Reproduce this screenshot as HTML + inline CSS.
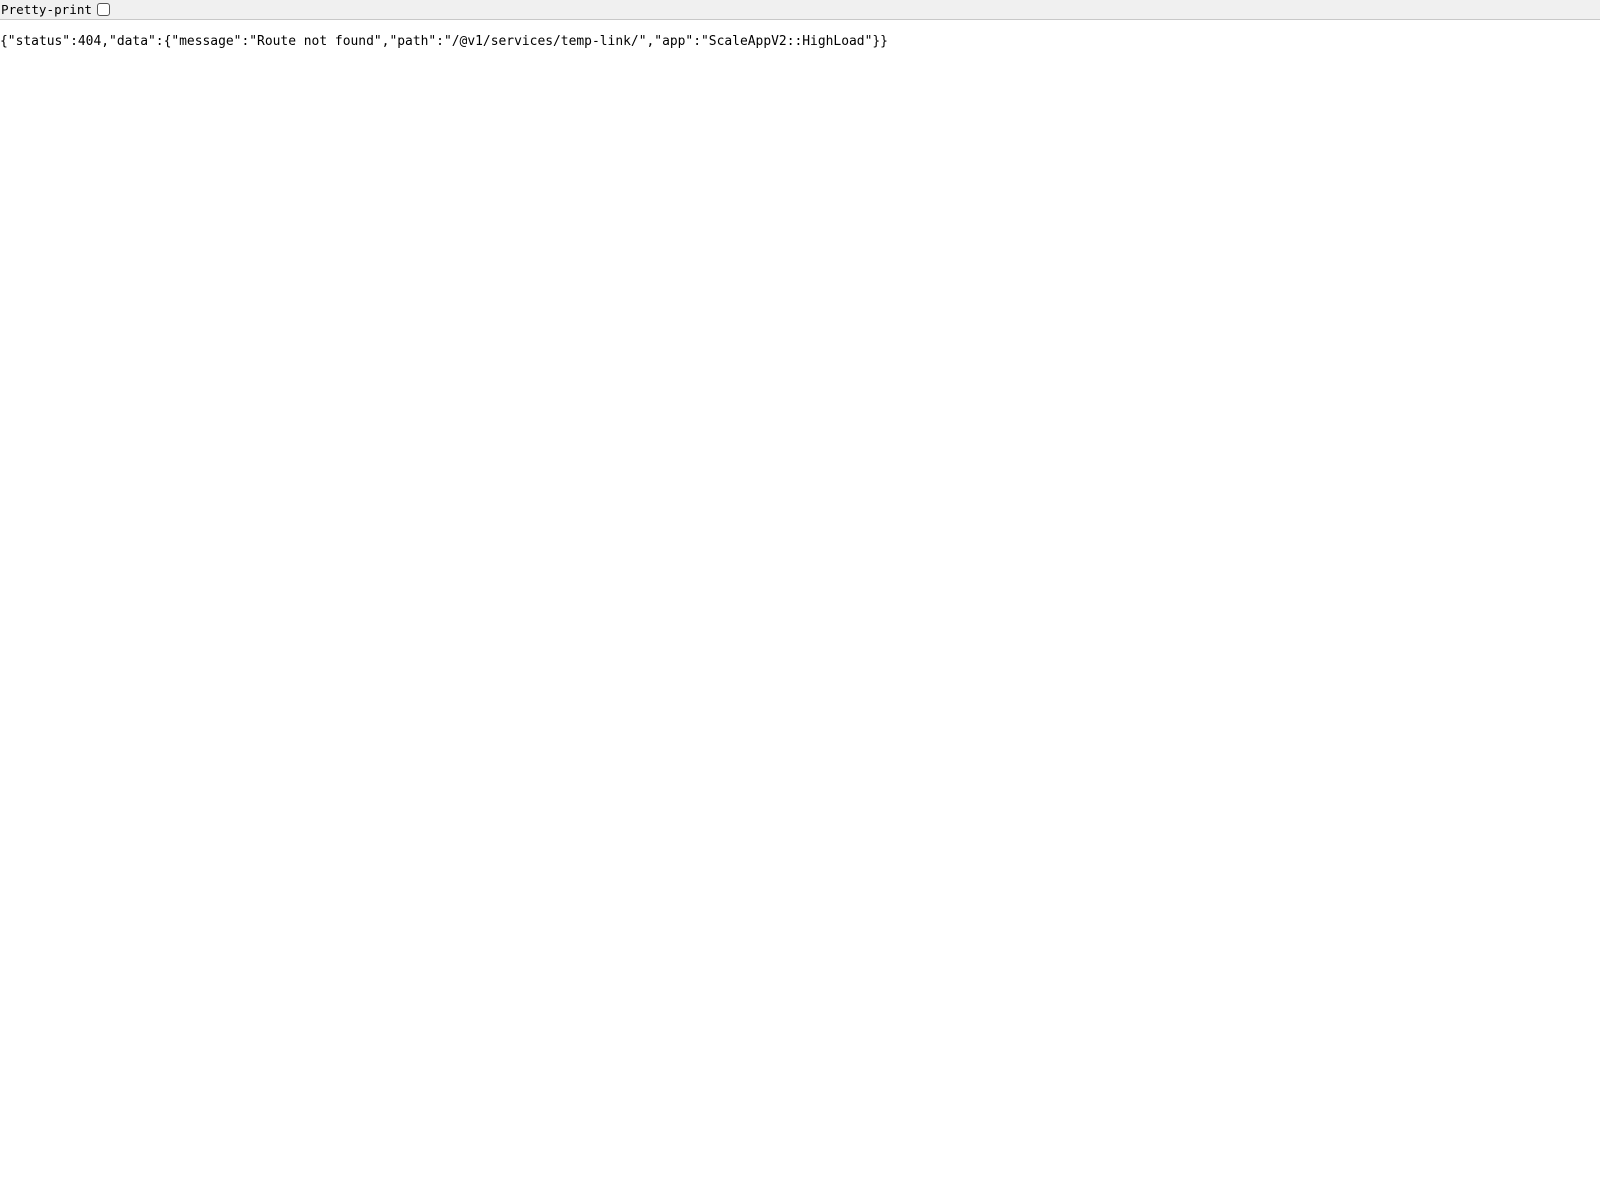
<!DOCTYPE html>
<html><head><meta charset="utf-8"><style>
html,body{margin:0;padding:0;background:#fff;width:1600px;height:1200px;overflow:hidden}
.bar{height:19px;background:#f0f0f0;border-bottom:1px solid #c8c8c8;font-family:"DejaVu Sans Mono","Liberation Mono",monospace;font-size:12.6px;color:#000;line-height:19px;white-space:nowrap;position:relative}
.bar span{position:absolute;left:1px;top:0}
.cb{position:absolute;left:97px;top:3px;width:13px;height:13px;border:1px solid #555;border-radius:3px;background:#fff;box-sizing:border-box}
pre{margin:0;position:absolute;left:0;top:34px;font-family:"DejaVu Sans Mono","Liberation Mono",monospace;font-size:12.95px;line-height:16px;color:#000}
</style></head><body>
<div class="bar"><span>Pretty-print</span><div class="cb"></div></div>
<pre>{"status":404,"data":{"message":"Route not found","path":"/@v1/services/temp-link/","app":"ScaleAppV2::HighLoad"}}</pre>
</body></html>
